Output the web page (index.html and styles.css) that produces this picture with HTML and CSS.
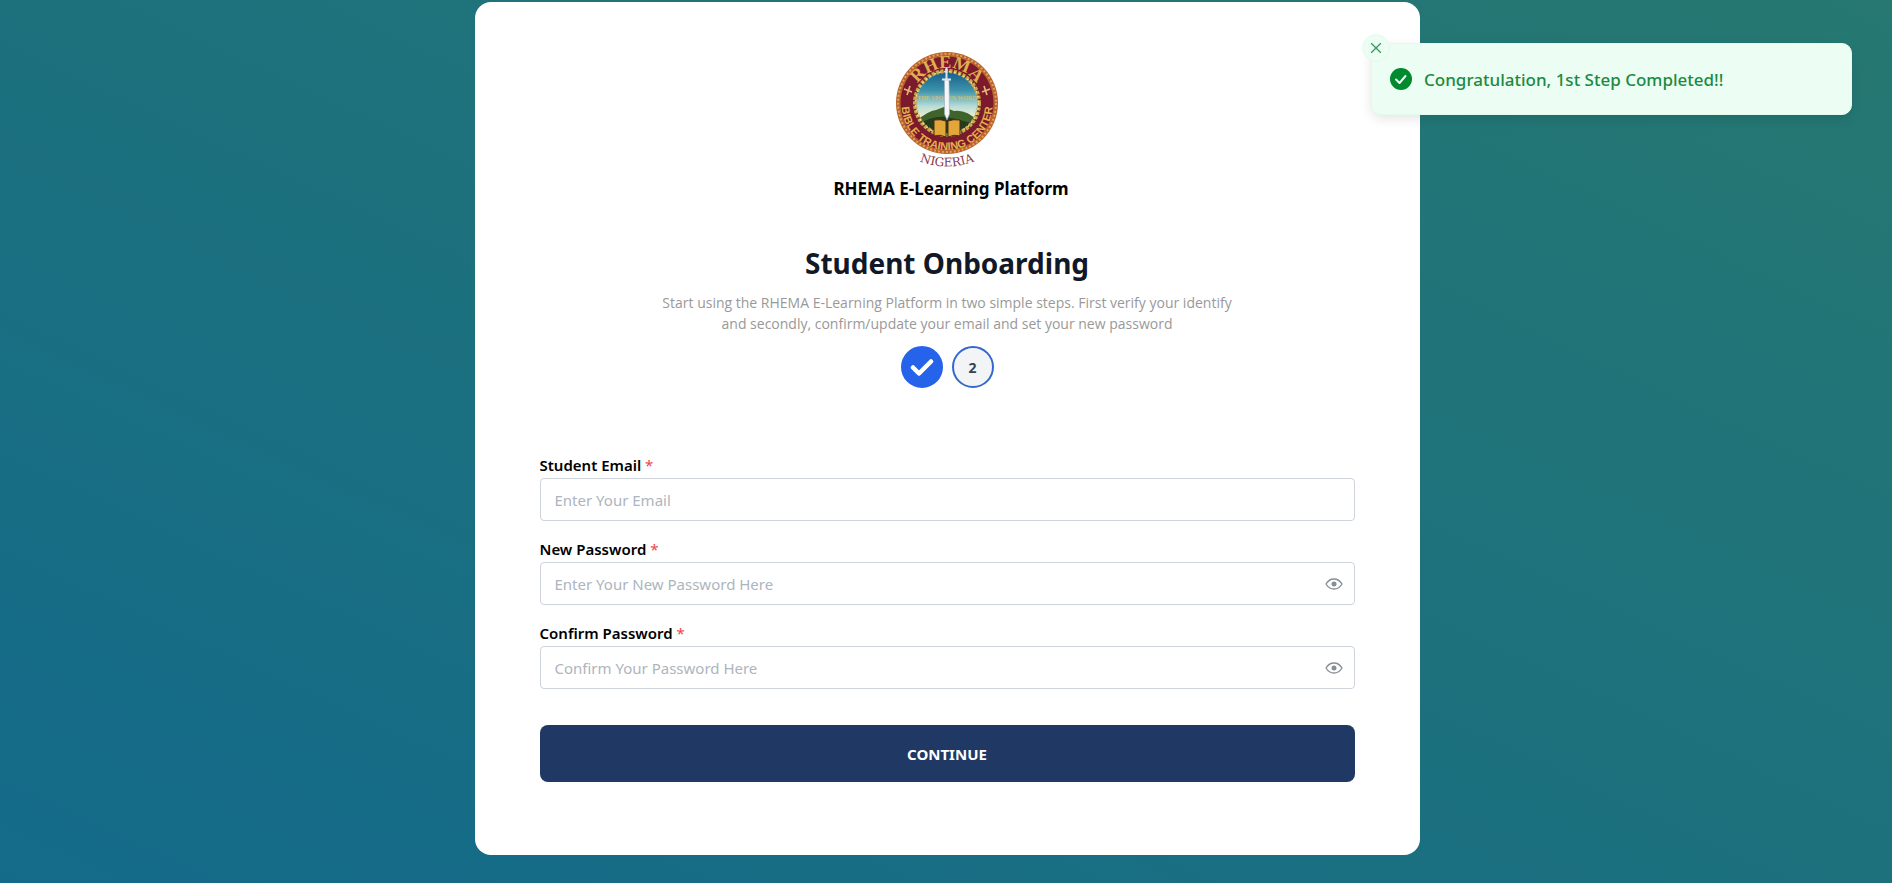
FILE: index.html
```html
<!DOCTYPE html>
<html lang="en">
<head>
<meta charset="utf-8">
<meta name="viewport" content="width=device-width, initial-scale=1">
<title>Student Onboarding</title>
<link rel="stylesheet" href="styles.css">
</head>
<body>
<main class="card">
  <header class="brand">
    <svg class="logo" viewBox="0 0 102 118" role="img" aria-label="RHEMA Bible Training Center Nigeria">
      <defs>
        <linearGradient id="sky" x1="0" y1="0" x2="0" y2="1">
          <stop offset="0" stop-color="#155f8c"/>
          <stop offset=".3" stop-color="#3d93aa"/>
          <stop offset=".55" stop-color="#b8dcd5"/>
          <stop offset=".7" stop-color="#e3ecd6"/>
        </linearGradient>
        <clipPath id="disc"><circle cx="51" cy="52" r="31"/></clipPath>
        <path id="arcTop" d="M16 52a35 35 0 0 1 70 0"/>
        <path id="arcBottom" d="M7 42a45.500 45.500 0 1 0 88 0"/>
        <path id="arcName" d="M10 104Q51 127 92 104"/>
      </defs>
      <circle cx="51" cy="52" r="51" fill="#b8642a"/>
      <circle cx="51" cy="52" r="49" fill="none" stroke="#e0a060" stroke-width="2" stroke-dasharray="2 2"/>
      <circle cx="51" cy="52" r="46.500" fill="#7c1a2d"/>
      <circle cx="51" cy="52" r="34" fill="#6b3b1b"/>
      <g clip-path="url(#disc)">
        <rect x="20" y="21" width="62" height="62" fill="url(#sky)"/>
        <path d="M20 70q12-10 20-11l8-3 10 4q12-2 24 10v14H20z" fill="#3f632b"/>
        <path d="M20 74q18-10 30-8t32 8v10H20z" fill="#243c1e"/>
      </g>
      <circle cx="51" cy="52" r="32" fill="none" stroke="#cfa650" stroke-width="4" stroke-dasharray="3 1.500"/>
      <circle cx="51" cy="52" r="31.500" fill="none" stroke="#f0d98a" stroke-width="1.500" stroke-dasharray="2 3"/>
      <text class="logo-word" x="51" y="49" text-anchor="middle">THE SPOKEN WORD</text>
      <path d="M38 69q7-1 12 1v16q-6-3-12-1zM52 70q5-2 12-1v16q-6-2-12 1z" fill="#e3a638" stroke="#4b2a13"/>
      <path d="M48.500 29h4.500l.5 34-2.500 6-2.500-6z" fill="#f4f7fa" stroke="#9aa9b5" stroke-width=".6"/>
      <path d="M46 28.500h9M50.500 17v12" stroke="#dfe7ee" stroke-width="2"/>
      <text class="logo-top"><textPath href="#arcTop" startOffset="50%" text-anchor="middle">RHEMA</textPath></text>
      <text class="logo-bottom"><textPath href="#arcBottom" startOffset="50%" text-anchor="middle">BIBLE TRAINING CENTER</textPath></text>
      <path d="M8 38l8 3M14 35l-3 9M94 38l-8 3M88 35l3 9" stroke="#e6b878" stroke-width="1.600"/>
      <text class="logo-name"><textPath href="#arcName" startOffset="50%" text-anchor="middle">NIGERIA</textPath></text>
    </svg>
    <p class="platform">RHEMA E-Learning Platform</p>
  </header>

  <section class="intro">
    <h1>Student Onboarding</h1>
    <p class="lead">Start using the RHEMA E-Learning Platform in two simple steps. First verify your identify and secondly, confirm/update your email and set your new password</p>
    <ol class="steps">
      <li class="step step-done" aria-label="Step 1 completed">
        <svg viewBox="0 0 24 24" width="24" height="24" aria-hidden="true"><path d="M3 12.500l6 6L21 6.500" fill="none" stroke="#fff" stroke-width="4.500" stroke-linecap="round" stroke-linejoin="round"/></svg>
      </li>
      <li class="step step-current">2</li>
    </ol>
  </section>

  <form class="form">
    <div class="field">
      <label for="email">Student Email <span class="required">*</span></label>
      <input id="email" type="email" placeholder="Enter Your Email">
    </div>
    <div class="field">
      <label for="password">New Password <span class="required">*</span></label>
      <div class="password">
        <input id="password" type="password" placeholder="Enter Your New Password Here">
        <button class="reveal" type="button" aria-label="Show new password"><svg viewBox="0 0 18 12" width="18" height="12"><path d="M1 6Q4 1 9 1t8 5q-3 5-8 5T1 6z" fill="none" stroke="currentColor" stroke-width="1.300"/><circle cx="9" cy="6" r="2.500" fill="currentColor"/></svg></button>
      </div>
    </div>
    <div class="field">
      <label for="confirm">Confirm Password <span class="required">*</span></label>
      <div class="password">
        <input id="confirm" type="password" placeholder="Confirm Your Password Here">
        <button class="reveal" type="button" aria-label="Show confirmed password"><svg viewBox="0 0 18 12" width="18" height="12"><path d="M1 6Q4 1 9 1t8 5q-3 5-8 5T1 6z" fill="none" stroke="currentColor" stroke-width="1.300"/><circle cx="9" cy="6" r="2.500" fill="currentColor"/></svg></button>
      </div>
    </div>
    <button class="submit" type="submit">CONTINUE</button>
  </form>
</main>

<div class="toast" role="status">
  <button class="toast-close" type="button" aria-label="Close"><svg viewBox="0 0 10 10" width="10" height="10"><path d="M0 0l10 10M10 0L0 10" stroke="currentColor" stroke-width="1.300"/></svg></button>
  <svg class="toast-icon" viewBox="0 0 22 22" width="22" height="22" aria-hidden="true"><circle cx="11" cy="11" r="11" fill="#008a2e"/><path d="M6 11.500l3.500 3.500L15.500 8" fill="none" stroke="#ecfdf3" stroke-width="2" stroke-linecap="round" stroke-linejoin="round"/></svg>
  <span>Congratulation, 1st Step Completed!!</span>
</div>
</body>
</html>
```
FILE: styles.css
```css
* {
  box-sizing: border-box;
}

body {
  margin: 0;
  padding: 2px 0 28px 2px;
  min-height: 100vh;
  background: linear-gradient(to top right, #136a8a, #267871);
  font-family: "Noto Sans", "Open Sans", sans-serif;
  color: #000;
}

h1,
p,
ol {
  margin: 0;
  padding: 0;
}

button,
input {
  font: inherit;
}

.card {
  width: 50%;
  min-width: 320px;
  margin: 0 auto;
  padding: 49px 65px 73px;
  background: #fff;
  border-radius: 16px;
}

.brand {
  display: flex;
  flex-direction: column;
  align-items: center;
  gap: 8px;
}

.logo {
  width: 102px;
  height: 118px;
}

.logo text {
  font-family: "Liberation Serif", serif;
  font-weight: 700;
}

.logo .logo-top {
  font-size: 18px;
  fill: #e0b050;
}

.logo .logo-bottom {
  font-family: "Liberation Sans", sans-serif;
  font-size: 11px;
  fill: #e3b04c;
}

.logo .logo-word {
  font-size: 6px;
  fill: #d0bd78;
}

.logo .logo-name {
  font-family: "DejaVu Serif", serif;
  font-size: 12px;
  font-weight: 400;
  fill: #8a3a50;
}

.platform {
  padding-left: 8px;
  font-size: 17px;
  font-weight: 700;
  line-height: 24px;
}

.intro {
  display: flex;
  flex-direction: column;
  align-items: center;
  margin-top: 44px;
  text-align: center;
}

h1 {
  font-size: 28px;
  font-weight: 700;
  line-height: 36px;
  color: #111827;
}

.lead {
  max-width: 580px;
  margin-top: 11px;
  font-family: "Open Sans", "Noto Sans", sans-serif;
  font-size: 14px;
  line-height: 21px;
  color: #999;
}

.steps {
  display: flex;
  gap: 9px;
  margin-top: 12px;
  list-style: none;
}

.step {
  display: flex;
  align-items: center;
  justify-content: center;
  width: 42px;
  height: 42px;
  border: 2px solid #2563eb;
  border-radius: 50%;
  font-size: 14px;
  font-weight: 700;
}

.step-done {
  background: #2563eb;
}

.step-current {
  background: #f3f4f6;
  border-color: #3468cf;
  color: #374151;
}

.form {
  display: flex;
  flex-direction: column;
  gap: 17px;
  margin-top: 66px;
}

.field {
  display: flex;
  flex-direction: column;
}

.field label {
  padding-bottom: 2px;
  font-size: 15px;
  font-weight: 600;
  line-height: 22px;
}

.required {
  color: #ef4444;
  font-weight: 400;
}

.field input {
  width: 100%;
  height: 43px;
  padding: 0 14px;
  background: #fff;
  border: 1px solid #ced4da;
  border-radius: 4px;
  font-size: 15px;
}

.field input::placeholder {
  color: #adb5bd;
  opacity: 1;
}

.password {
  position: relative;
}

.reveal {
  position: absolute;
  top: 0;
  right: 0;
  display: flex;
  align-items: center;
  justify-content: center;
  width: 42px;
  height: 43px;
  padding: 0;
  background: none;
  border: 0;
  color: #868e96;
}

.submit {
  height: 57px;
  margin-top: 19px;
  background: #203864;
  border: 0;
  border-radius: 8px;
  color: #fff;
  font-size: 15px;
  font-weight: 700;
}

.toast {
  position: absolute;
  top: 43px;
  right: 40px;
  display: flex;
  align-items: center;
  gap: 12px;
  width: 481px;
  height: 72px;
  padding: 0 18px;
  background: #ecfdf3;
  border: 1px solid #e3fbed;
  border-radius: 10px;
  box-shadow: 0 4px 12px rgba(0, 0, 0, 0.1);
  color: #1b8a40;
  font-size: 17px;
  font-weight: 500;
}

.toast-close {
  position: absolute;
  top: -10px;
  left: -10px;
  display: flex;
  align-items: center;
  justify-content: center;
  width: 28px;
  height: 28px;
  padding: 0;
  background: #ecfdf3;
  border: 1px solid #e3fbed;
  border-radius: 50%;
  color: #33975a;
}
```
